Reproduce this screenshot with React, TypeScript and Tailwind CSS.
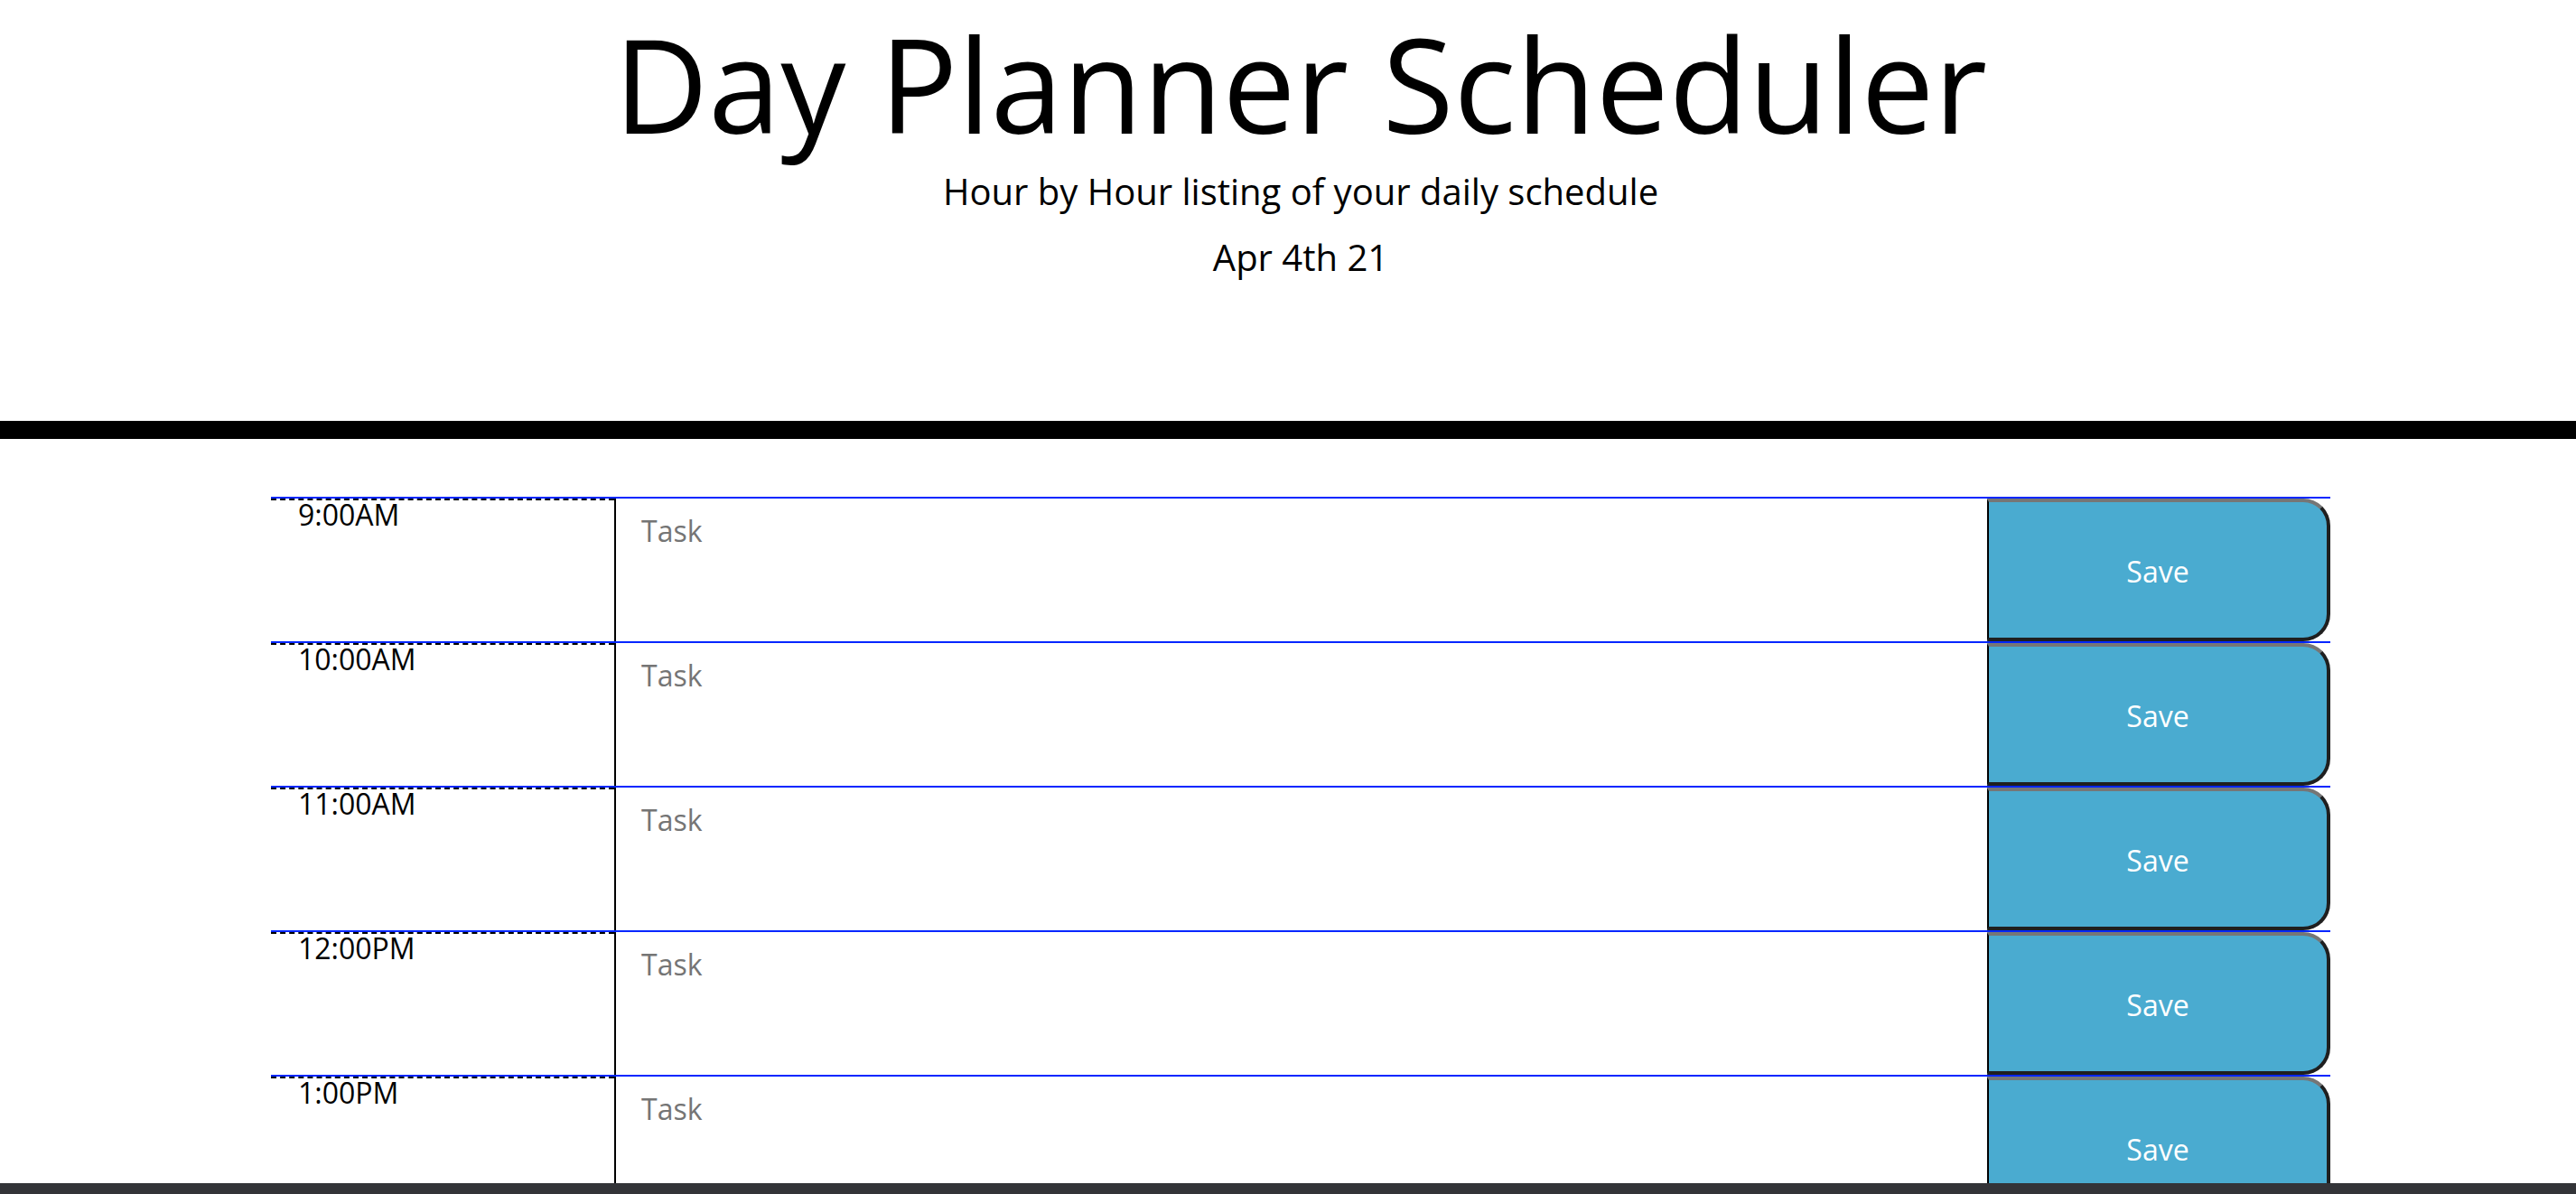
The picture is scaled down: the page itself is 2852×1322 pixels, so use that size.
const HOURS = ["9:00AM", "10:00AM", "11:00AM", "12:00PM", "1:00PM"];

function TimeBlock({ hour }: { hour: string }) {
  return (
    <div className="flex h-[160px] border-t-2 border-[#0026ff]">
      {/* hour label */}
      <div className="w-[380px] shrink-0 border-t-2 border-dashed border-black pl-[30px] text-[32px] leading-none">
        {hour}
      </div>
      <textarea
        placeholder="Task"
        className="flex-1 resize-none border-l-2 border-black bg-transparent pl-[28px] pt-[12px] text-[32px] leading-[1.5] text-black outline-none placeholder:text-[#757575]"
      />
      <button
        type="button"
        className="w-[380px] shrink-0 rounded-r-[30px] border-t-4 border-r-4 border-b-4 border-l-2 border-t-[#767676] border-r-[#1f1f1f] border-b-[#1f1f1f] border-l-black bg-[#4aabd0] pt-[3px] text-[32px] text-white"
      >
        Save
      </button>
    </div>
  );
}

export default function App() {
  return (
    <div className="flex h-[1322px] flex-col overflow-hidden bg-white font-['Open_Sans',sans-serif] text-black">
      <header className="h-[486px] shrink-0 border-b-[20px] border-black">
        <div className="ml-[300px] w-[2280px] text-center">
          <h1 className="mt-[20px] text-[144px] font-normal leading-none">Day Planner Scheduler</h1>
          <p className="mt-[18px] text-[40px] leading-[1.5]">Hour by Hour listing of your daily schedule</p>
          <p className="mt-[13px] text-[40px] leading-[1.5]">Apr 4th 21</p>
        </div>
      </header>

      <main className="flex-1 overflow-hidden pt-[64px]">
        <div className="ml-[300px] w-[2280px]">
          {HOURS.map((h) => (
            <TimeBlock key={h} hour={h} />
          ))}
        </div>
      </main>

      <div className="h-[12px] shrink-0 bg-[#333438]" />
    </div>
  );
}
